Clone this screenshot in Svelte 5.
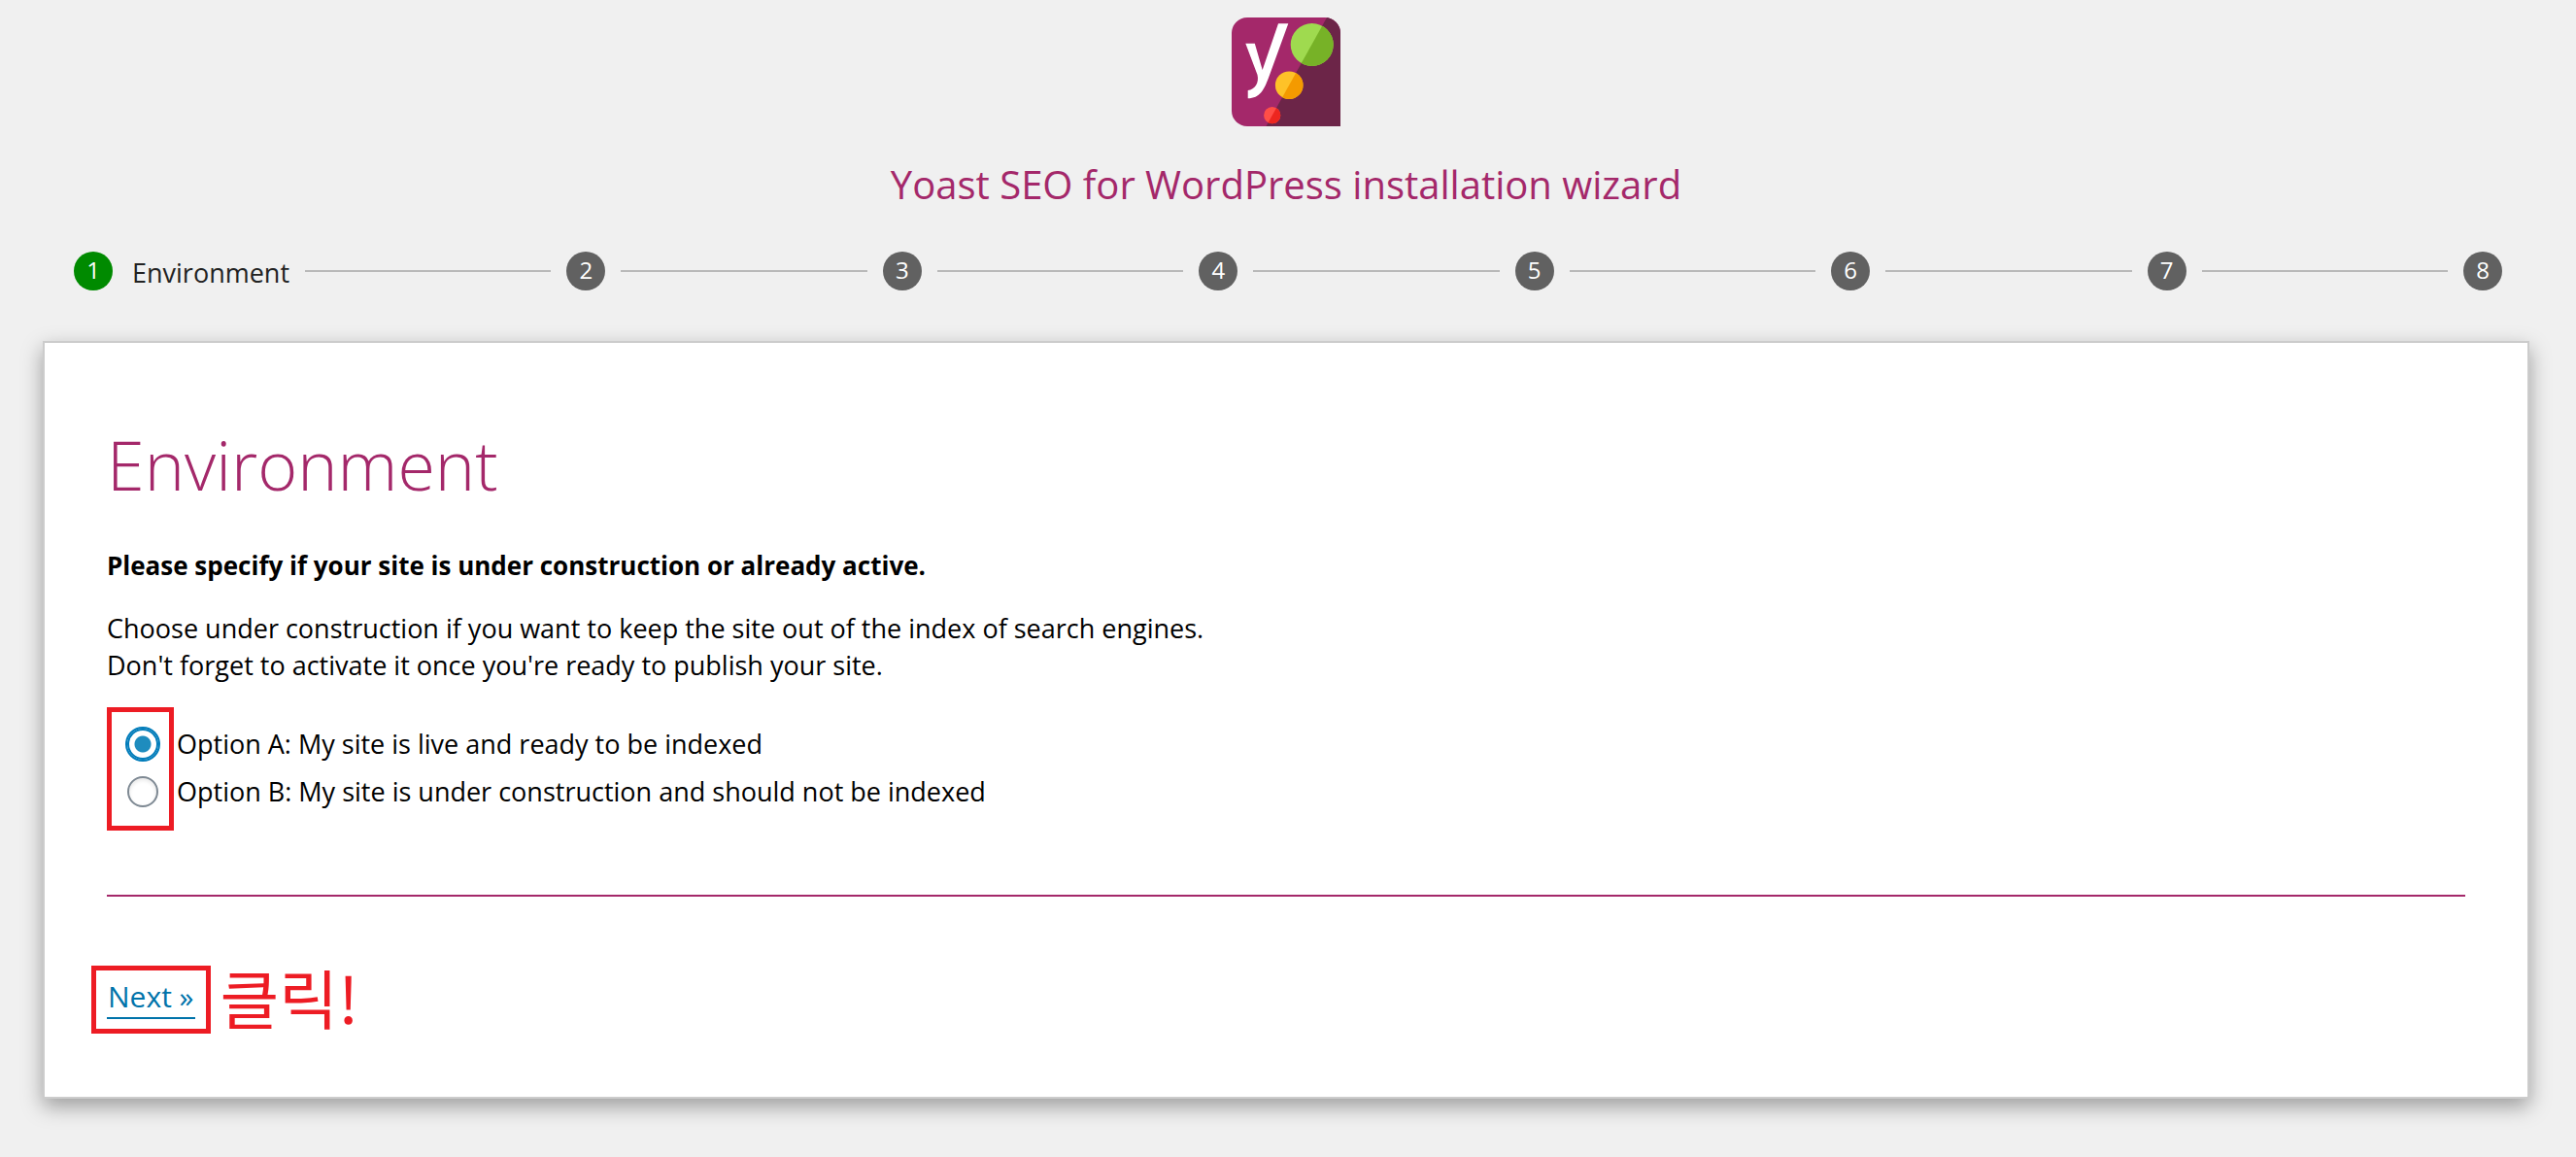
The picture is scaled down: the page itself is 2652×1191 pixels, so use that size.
<script>
  let current = $state(1);
  let environment = $state('live');

  const steps = [
    { id: 1, name: 'Environment' },
    { id: 2, name: 'Site type' },
    { id: 3, name: 'Organization or person' },
    { id: 4, name: 'Search engine visibility' },
    { id: 5, name: 'Multiple authors' },
    { id: 6, name: 'Title settings' },
    { id: 7, name: 'Continue learning' },
    { id: 8, name: 'Success' }
  ];

  const options = [
    { value: 'live', label: 'Option A: My site is live and ready to be indexed' },
    { value: 'construction', label: 'Option B: My site is under construction and should not be indexed' }
  ];
</script>

<div class="wizard">
  <header>
    <svg class="logo" viewBox="0 0 112 112" role="img" aria-label="Yoast">
      <defs>
        <clipPath id="dark-half">
          <path d="M98 0H112V112H35.500Z" />
        </clipPath>
        <clipPath id="badge">
          <path d="M16 0H96A16 16 0 0 1 112 16V112H16A16 16 0 0 1 0 96V16A16 16 0 0 1 16 0Z" />
        </clipPath>
      </defs>
      <g clip-path="url(#badge)">
        <rect width="112" height="112" fill="#a4286a" />
        <path d="M98 0H112V112H35.500Z" fill="#6c2548" />
      </g>
      <circle cx="82.700" cy="28" r="22" fill="#9fda4f" />
      <circle cx="59.200" cy="69.700" r="14.300" fill="#fec228" />
      <circle cx="41.700" cy="100.700" r="8.600" fill="#ff4e47" />
      <g clip-path="url(#dark-half)">
        <circle cx="82.700" cy="28" r="22" fill="#77b227" />
        <circle cx="59.200" cy="69.700" r="14.300" fill="#f49a00" />
        <circle cx="41.700" cy="100.700" r="8.600" fill="#ed261f" />
      </g>
      <path
        fill="#fff"
        d="M48 6.300H58.300L38 62C33.500 74 29 83.300 16.700 83.300V75C24 74.300 28.500 67 26.500 59L14.300 26.700H23.800L31.700 54Z"
      />
    </svg>
    <h1>Yoast SEO for WordPress installation wizard</h1>
  </header>

  <ol class="stepper">
    {#each steps as step, i}
      {#if i > 0}
        <li class="line" aria-hidden="true"></li>
      {/if}
      <li class="step">
        <button
          type="button"
          class="dot"
          class:active={step.id === current}
          aria-label="Step {step.id}"
          onclick={() => (current = step.id)}>{step.id}</button>
        {#if step.id === current}
          <span class="step-name">{step.name}</span>
        {/if}
      </li>
    {/each}
  </ol>

  <main class="card">
    <h2>Environment</h2>
    <p class="lead">Please specify if your site is under construction or already active.</p>
    <p class="help">
      Choose under construction if you want to keep the site out of the index of search engines.<br />
      Don't forget to activate it once you're ready to publish your site.
    </p>

    <div class="options" role="radiogroup" aria-label="Environment">
      {#each options as option}
        <label>
          <input type="radio" name="environment" value={option.value} bind:group={environment} />
          <span>{option.label}</span>
        </label>
      {/each}
      <span class="marker radios"></span>
    </div>

    <hr />

    <div class="actions">
      <div class="next-wrap">
        <button type="button" class="next">Next »</button>
        <span class="marker click"></span>
      </div>
      <span class="callout" lang="ko">클릭!</span>
    </div>
  </main>
</div>

<style>
  :global(body) {
    background: #f0f0f0;
  }

  .wizard {
    padding: 18px 48px 40px 44px;
    font-family: 'Open Sans', 'Noto Sans', sans-serif;
    font-size: 27px;
    line-height: 38px;
    color: #000;
  }

  h1,
  h2,
  p,
  ol {
    margin: 0;
    padding: 0;
  }

  button {
    font: inherit;
    border: 0;
    cursor: pointer;
  }

  header {
    display: flex;
    flex-direction: column;
    align-items: center;
    gap: 32px;
  }

  .logo {
    width: 112px;
    height: 112px;
    display: block;
  }

  h1 {
    font-size: 40px;
    line-height: 56px;
    font-weight: 400;
    color: #a4286a;
  }

  .stepper {
    display: flex;
    align-items: center;
    gap: 16px;
    list-style: none;
    padding: 0 28px 0 32px;
    margin: 41px 0 52px;
  }

  .step {
    display: flex;
    align-items: center;
    gap: 20px;
    height: 40px;
  }

  .line {
    flex: 1;
    height: 2px;
    background: #b9b9b9;
  }

  .dot {
    width: 40px;
    height: 40px;
    padding: 0 0 2px;
    border-radius: 50%;
    background: #616161;
    color: #fff;
    font-size: 24px;
    line-height: 38px;
    text-align: center;
  }

  .dot.active {
    background: #008a00;
  }

  .step-name {
    color: #222;
    padding-top: 4px;
  }

  .card {
    background: #fff;
    border: 2px solid #ccc;
    box-shadow: 0 8px 20px rgba(0, 0, 0, 0.35);
    padding: 77px 64px 62px;
  }

  h2 {
    font-size: 70px;
    line-height: 96px;
    font-weight: 300;
    color: #a4286a;
    margin-bottom: 37px;
  }

  .lead {
    font-size: 26px;
    font-weight: 700;
    margin-bottom: 27px;
  }

  .options {
    position: relative;
    display: flex;
    flex-direction: column;
    gap: 11px;
    margin: 43px 0 87px;
  }

  label {
    display: flex;
    align-items: center;
    align-self: flex-start;
    gap: 19px;
    padding-left: 21px;
  }

  input {
    appearance: none;
    width: 32px;
    height: 32px;
    margin: 0;
    border: 2px solid #7e8993;
    border-radius: 50%;
    background: #fff;
    box-shadow: inset 0 2px 4px rgba(0, 0, 0, 0.1);
  }

  input:checked {
    border-color: #007cba;
    background: radial-gradient(circle, #1e8cbe 8px, #fff 9px);
    box-shadow: 0 0 0 2px #007cba;
  }

  .marker {
    position: absolute;
    border: 5px solid #ed1c24;
    pointer-events: none;
    box-sizing: border-box;
  }

  .radios {
    left: 0;
    top: -19px;
    bottom: -21px;
    width: 69px;
  }

  hr {
    border: 0;
    height: 2px;
    margin: 0;
    background: #a4286a;
  }

  .actions {
    display: flex;
    align-items: center;
    gap: 26px;
    margin-top: 64px;
  }

  .next-wrap {
    position: relative;
  }

  .next {
    display: block;
    padding: 0 1px;
    background: none;
    border-bottom: 2px solid #0073aa;
    color: #0073aa;
    font-size: 30px;
    line-height: 42px;
  }

  .click {
    inset: -11px -16px -15px;
  }

  .callout {
    padding-bottom: 4px;
    font-family: 'Noto Sans CJK KR', sans-serif;
    font-weight: 400;
    font-size: 66px;
    line-height: 76px;
    color: #ed1c24;
  }
</style>
